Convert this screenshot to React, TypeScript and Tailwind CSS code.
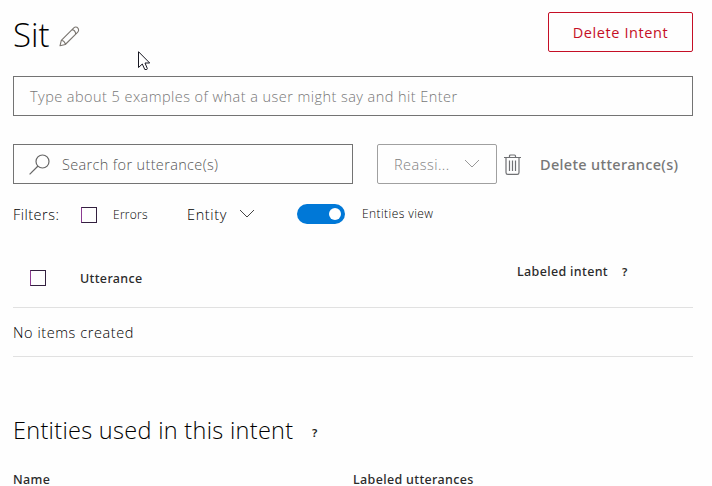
import React from "react";

function Pencil() {
  return (
    <svg className="block" width="21" height="21" viewBox="0 0 21 21" fill="none" stroke="#7a756f" strokeWidth="1.1" strokeLinejoin="round">
      <path d="M1 19.800 2.300 14.300 14.800 1.800Q16.200 .5 18 1.300Q19.700 2.400 19.600 4.200Q19.500 5.300 18.500 6.300L6.300 18.500ZM13 3.600Q16.300 4 16.700 8M2.300 14.300Q5.800 14.800 6.300 18.500" />
    </svg>
  );
}

function Chevron({ color }: { color: string }) {
  return (
    <svg className="block shrink-0" width="16" height="10" viewBox="0 0 16 10" fill="none" stroke={color} strokeWidth="1">
      <path d="M1 1 8 8 15 1" />
    </svg>
  );
}

function SearchIcon() {
  return (
    <svg className="block shrink-0" width="21" height="21" viewBox="0 0 21 21" fill="none" stroke="#666" strokeWidth="1.2">
      <circle cx="13.500" cy="7.500" r="6.500" />
      <path d="M9 12 .6 20.400" />
    </svg>
  );
}

function Trash() {
  return (
    <svg className="block shrink-0" width="17" height="21" viewBox="0 0 17 21" fill="none" stroke="#6f7073" strokeWidth="1.200">
      <path d="M0 3.500H17M5.500 3.500V2Q5.500 1 6.500 1H10.500Q11.500 1 11.500 2V3.500M2 3.500V18.500Q2 20.400 3.800 20.400H13.200Q15 20.400 15 18.500V3.500M5.500 6.500V17M8.500 6.500V17M11.500 6.500V17" />
    </svg>
  );
}

function Cursor() {
  return (
    <svg className="absolute left-[138px] top-[51px]" width="13" height="20" viewBox="0 0 13 20" fill="#fff" stroke="#171722" strokeWidth="1">
      <path d="M.5 .7V16.500L4.300 13 6.800 18.500H8.800L9.300 17.500 7 12H11.700Z" />
    </svg>
  );
}

function Checkbox() {
  return <span className="block size-4 shrink-0 border border-[#33203f] border-l-[#8b3a91]" />;
}

export default function App() {
  return (
    <main className="relative h-[486px] w-[712px] overflow-hidden whitespace-nowrap bg-[#fefefe] pl-[13px] pr-[19px] pt-3 font-['Open_Sans','Noto_Sans',sans-serif] text-[#222]">
      <header className="flex h-10 items-center">
        <h1 className="w-[46px] pt-[5px] text-[33px] font-light leading-10 text-black">Sit</h1>
        <div className="pt-2"><Pencil /></div>
        <button className="ml-auto h-10 w-[145px] rounded-[2px] border border-[#c50f26] pt-0.5 text-[14.500px] font-medium tracking-[0.600px] text-[#c50f26]">Delete Intent</button>
      </header>
      <div className="mt-6 flex h-10 items-center border border-[#737373] pl-4 pt-0.5 text-[14.500px] font-light tracking-[0.450px] text-[#777]">
        Type about 5 examples of what a user might say and hit Enter
      </div>
      <div className="mt-7 flex h-10 items-center">
        <div className="flex h-10 w-[340px] items-center gap-3 border border-[#737373] pl-[15px] text-[14.500px] font-light tracking-[0.350px] text-[#555]">
          <SearchIcon />
          <span className="pt-0.5">Search for utterance(s)</span>
        </div>
        <div className="ml-6 flex h-10 w-[120px] items-center justify-between rounded-[2px] border border-[#a0a0a0] pl-4 pr-4 font-light text-[14.500px] tracking-[0.480px] text-[#808080]">
          <span className="pt-0.5">Reassi...</span>
          <Chevron color="#999" />
        </div>
        <div className="ml-[7px] w-9"><Trash /></div>
        <span className="pt-0.5 font-['Noto_Sans',sans-serif] text-[14.500px] font-medium tracking-[0.330px] text-[#777]">Delete utterance(s)</span>
      </div>
      <div className="mt-[15px] flex h-[30px] items-center">
        <span className="w-[68px] pt-0.5 font-light text-[14.500px] tracking-[0.480px] text-black">Filters:</span>
        <span className="pt-0.5"><Checkbox /></span>
        <span className="ml-4 w-[74px] pt-0.5 text-[12px] font-light tracking-[0.250px] text-black">Errors</span>
        <span className="w-[52px] pt-0.5 font-light text-[14.500px] tracking-[0.650px] text-black">Entity</span>
        <Chevron color="#444" />
        <span className="ml-[42px] flex h-5 w-12 items-center justify-end rounded-full bg-[#0078d7] pr-1">
          <span className="size-3 rounded-full bg-white" />
        </span>
        <span className="ml-[17px] text-[12px] font-light tracking-[0.420px] text-black">Entities view</span>
      </div>
      <div className="flex h-[79px] items-center border-b border-[#e1e1e1] pl-[17px] pt-5 font-['Noto_Sans',sans-serif] text-[12.500px] font-medium tracking-[0.350px] text-[#2b2b2b]">
        <Checkbox />
        <span className="ml-[34px] w-[437px] pt-0.5">Utterance</span>
        <span className="w-[105px] pb-[12px]">Labeled intent</span>
        <span className="pb-[12px] text-[11.500px] font-semibold">?</span>
      </div>
      <div className="flex h-[49px] items-center border-b border-[#e1e1e1] pt-0.5 font-light text-[14.500px] tracking-[0.570px] text-black">No items created</div>
      <h2 className="mt-[56px] flex h-9 items-center">
        <span className="w-[299px] text-[23.500px] font-light tracking-[0.300px] text-black">Entities used in this intent</span>
        <span className="pt-1 font-['Noto_Sans',sans-serif] text-[11.500px] font-semibold">?</span>
      </h2>
      <div className="mt-6 flex h-[14px] items-center font-['Noto_Sans',sans-serif] text-[12.500px] font-medium leading-[14px] tracking-[0.350px] text-[#2b2b2b]">
        <span className="w-[340px]">Name</span>
        <span>Labeled utterances</span>
      </div>
      <Cursor />
    </main>
  );
}
